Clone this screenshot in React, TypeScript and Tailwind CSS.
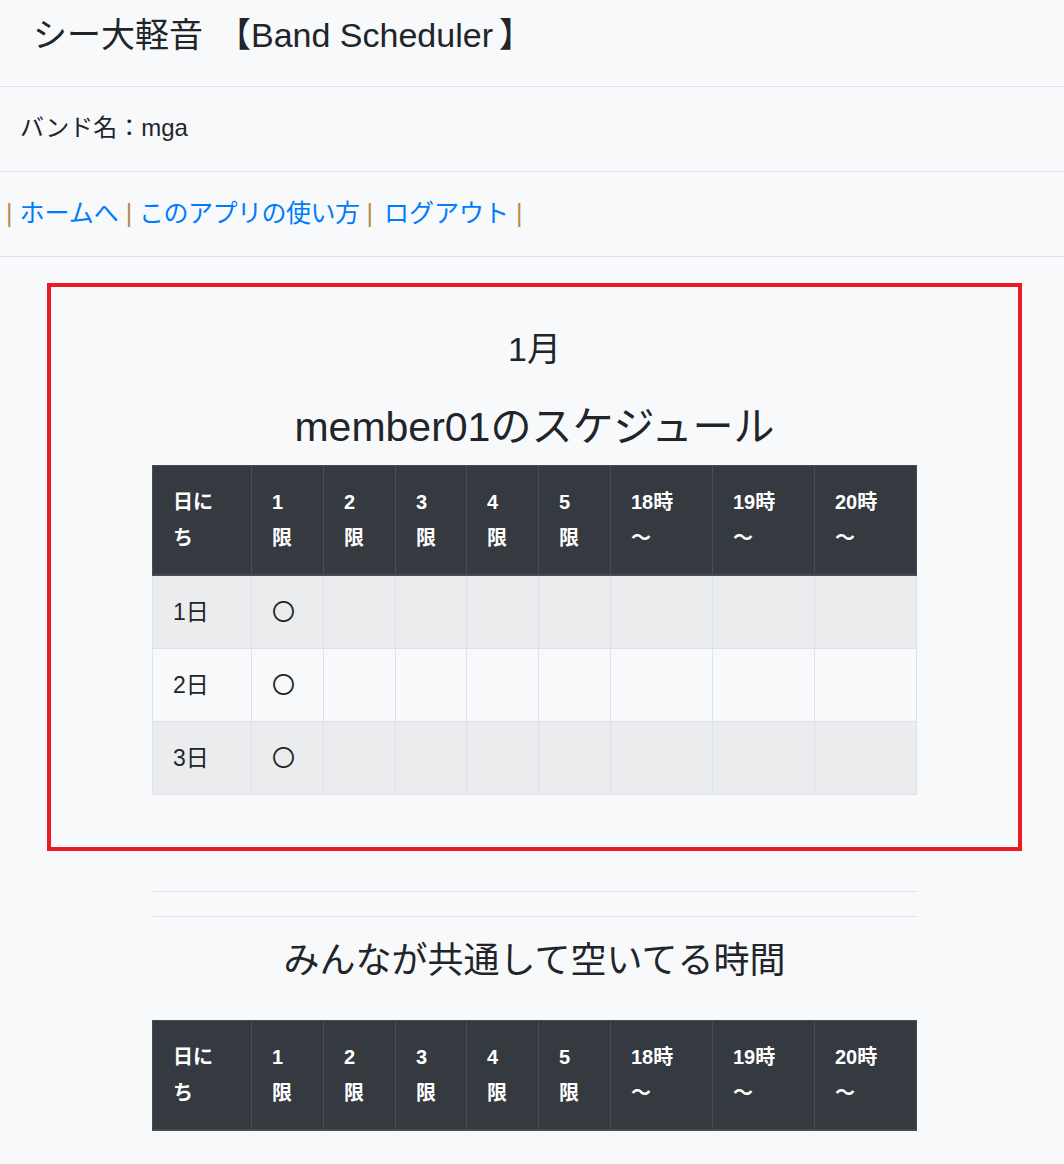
import React from 'react';

const FONT = { fontFamily: '"Liberation Sans", "Noto Sans CJK JP", sans-serif' };

const headers: [string, string, string][] = [
  ['日に', 'ち', 'w-[99px]'],
  ['1', '限', 'w-[72px]'],
  ['2', '限', 'w-[72px]'],
  ['3', '限', 'w-[71px]'],
  ['4', '限', 'w-[72px]'],
  ['5', '限', 'w-[72px]'],
  ['18時', '～', 'w-[102px]'],
  ['19時', '～', 'w-[102px]'],
  ['20時', '～', 'w-[102px]'],
];

const rows = [
  { day: '1日', marks: ['〇', '', '', '', '', '', '', ''] },
  { day: '2日', marks: ['〇', '', '', '', '', '', '', ''] },
  { day: '3日', marks: ['〇', '', '', '', '', '', '', ''] },
];

function ScheduleTable({ body }: { body?: typeof rows }) {
  return (
    <table className="mx-auto w-[764px] table-fixed border-collapse text-left text-[#212529]">
      <thead>
        <tr>
          {headers.map(([a, b, w]) => (
            <th
              key={a}
              className={`${w} border border-[#454d55] border-b-2 bg-[#343a40] px-5 py-[18px] text-left align-top text-[20px] font-bold leading-[36px] text-white`}
            >
              {a}
              <br />
              {b}
            </th>
          ))}
        </tr>
      </thead>
      {body && (
        <tbody className="text-[23px]">
          {body.map((r, i) => (
            <tr key={r.day} className={i % 2 === 0 ? 'bg-[#ebeced]' : 'bg-[#f8f9fa]'}>
              <td className="border border-[#dee2e6] px-5 py-5 leading-[32px]">{r.day}</td>
              {r.marks.map((m, j) => (
                <td key={j} className="border border-[#dee2e6] px-5 py-5 leading-[32px]">
                  {m}
                </td>
              ))}
            </tr>
          ))}
        </tbody>
      )}
    </table>
  );
}

export default function App() {
  return (
    <div className="min-h-[1164px] bg-[#f8f9fa] text-[#212529]" style={FONT}>
      <div className="h-[87px] border-b border-[#dee2e6] pl-[33px] pt-[14px]">
        <h1 className="whitespace-nowrap text-[34px] leading-[42px]">
          シー大軽音<span className="ml-[14px]">【</span>Band Scheduler<span className="ml-[6px]">】</span>
        </h1>
      </div>
      <div className="h-[85px] border-b border-[#dee2e6] pl-5 pt-[25px]">
        <p className="text-[24px] leading-[32px]">バンド名：mga</p>
      </div>
      <div className="h-[85px] border-b border-[#dee2e6] pl-[6px] pt-[24px]">
        <p className="whitespace-pre text-[25px] leading-[34px] text-[#b98a4e]">
          {'| '}
          <a className="text-[#007bff]" href="#">ホームへ</a>
          {' | '}
          <a className="text-[#007bff] tracking-[-0.5px]" href="#">このアプリの使い方</a>
          {' | '}
          <a className="ml-[4px] text-[#007bff]" href="#">ログアウト</a>
          {' |'}
        </p>
      </div>

      <div className="ml-[47px] w-[975px]">
        <section className="mt-[26px] border-4 border-[#ed1c24] pb-[52px] pt-[42px] text-center">
          <h2 className="text-[34px] leading-[40px]">1月</h2>
          <h1 className="mt-[34px] mb-[14px] text-[41px] leading-[48px]">member01のスケジュール</h1>
          <ScheduleTable body={rows} />
        </section>

        <div className="mx-auto mt-[40px] w-[764px] border-t border-[#dee2e6]" />
        <div className="mx-auto mt-[24px] w-[764px] border-t border-[#dee2e6]" />
        <h3 className="mt-[22px] mb-[37px] text-center text-[36px] leading-[44px]">みんなが共通して空いてる時間</h3>
        <ScheduleTable />
      </div>
    </div>
  );
}
